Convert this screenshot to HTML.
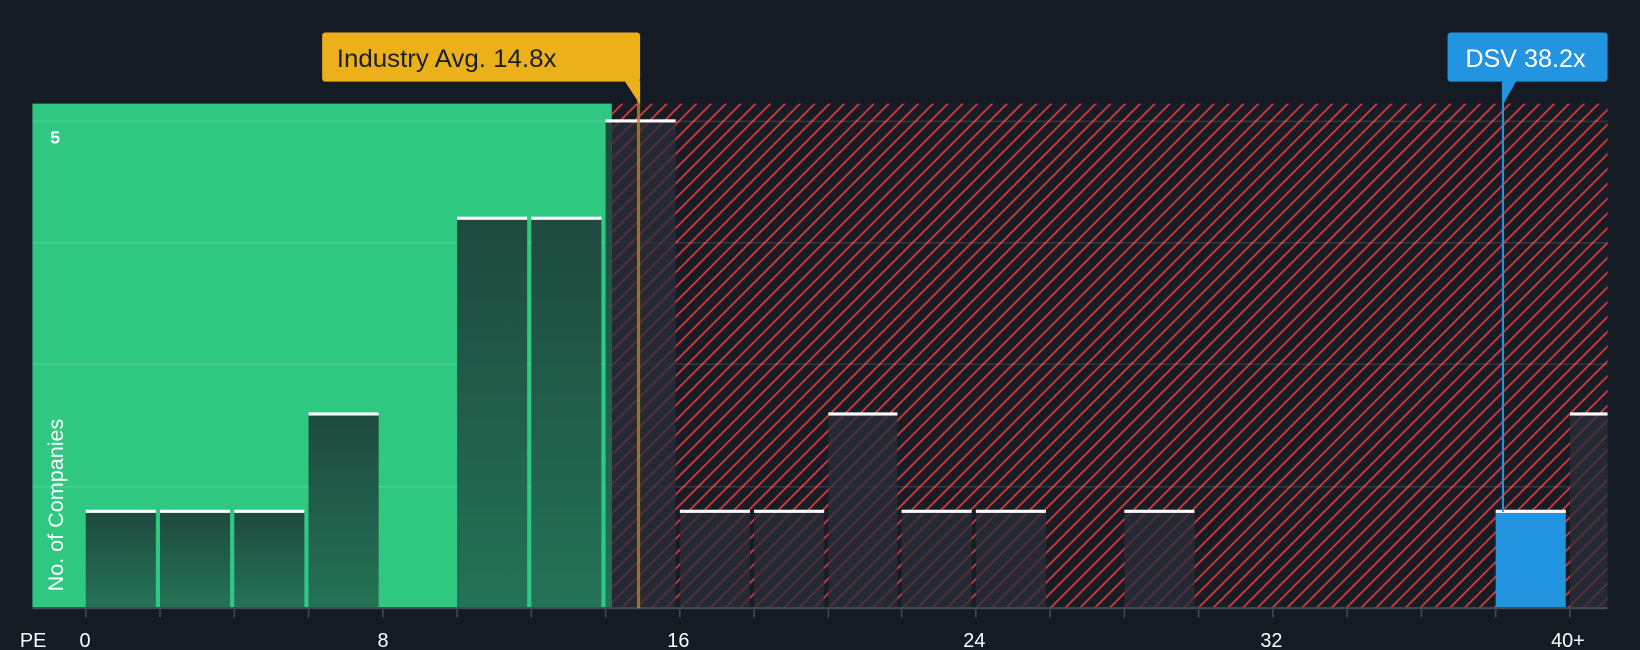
<!DOCTYPE html>
<html><head><meta charset="utf-8"><style>
html,body{margin:0;padding:0;background:#151b24;}
svg{display:block;}
text{font-family:"Liberation Sans",sans-serif;}
</style></head><body>
<svg width="1640" height="650" viewBox="0 0 1568 621" preserveAspectRatio="none" xmlns="http://www.w3.org/2000/svg">
<defs>
<pattern id="h" patternUnits="userSpaceOnUse" width="10" height="10" patternTransform="rotate(45)">
<rect width="10" height="10" fill="#181c25"/>
<rect x="0" y="0" width="1.7" height="10" fill="#d63a3e"/>
</pattern>
<linearGradient id="g" x1="0" y1="0" x2="0" y2="1"><stop offset="0" stop-color="#1e4a3f"/><stop offset="1" stop-color="#247356"/></linearGradient>
</defs>
<rect width="1568" height="621" fill="#151b24"/>
<rect x="31" y="99" width="554" height="482" fill="#2ec880"/>
<rect x="585" y="99" width="952" height="482" fill="url(#h)"/>
<g stroke="#ffffff" stroke-opacity="0.12" stroke-width="1.5">
<line x1="31" y1="116" x2="1537" y2="116"/><line x1="31" y1="232" x2="1537" y2="232"/>
<line x1="31" y1="348" x2="1537" y2="348"/><line x1="31" y1="465" x2="1537" y2="465"/>
</g>
<g fill="url(#g)">
<rect x="82" y="489" width="67" height="92"/><rect x="153" y="489" width="67" height="92"/>
<rect x="224" y="489" width="67" height="92"/><rect x="295" y="396" width="67" height="185"/>
<rect x="437" y="209" width="67" height="372"/><rect x="508" y="209" width="67" height="372"/>
<rect x="579" y="116" width="6" height="465"/>
</g>
<g fill="#2a2e38" fill-opacity="0.75">
<rect x="585" y="116" width="61" height="465"/>
<rect x="650" y="489" width="67" height="92"/><rect x="721" y="489" width="67" height="92"/>
<rect x="792" y="396" width="66" height="185"/><rect x="862" y="489" width="67" height="92"/>
<rect x="933" y="489" width="67" height="92"/><rect x="1075" y="489" width="67" height="92"/>
<rect x="1501" y="396" width="36" height="185"/>
</g>
<rect x="1430" y="489" width="67" height="92" fill="#2394e0"/>
<g fill="#ffffff">
<rect x="82" y="487" width="67" height="3"/><rect x="153" y="487" width="67" height="3"/>
<rect x="224" y="487" width="67" height="3"/><rect x="295" y="394" width="67" height="3"/>
<rect x="437" y="207" width="67" height="3"/><rect x="508" y="207" width="67" height="3"/>
<rect x="579" y="114" width="67" height="3"/>
<rect x="650" y="487" width="67" height="3"/><rect x="721" y="487" width="67" height="3"/>
<rect x="792" y="394" width="66" height="3"/><rect x="862" y="487" width="67" height="3"/>
<rect x="933" y="487" width="67" height="3"/><rect x="1075" y="487" width="67" height="3"/>
<rect x="1430" y="487" width="67" height="3"/><rect x="1501" y="394" width="36" height="3"/>
</g>
<rect x="31" y="580" width="1506" height="2" fill="#444a55"/>
<g stroke="#444a55" stroke-width="1.5">
<line x1="82" y1="582" x2="82" y2="590"/><line x1="153" y1="582" x2="153" y2="590"/><line x1="224" y1="582" x2="224" y2="590"/><line x1="295" y1="582" x2="295" y2="590"/><line x1="366" y1="582" x2="366" y2="590"/><line x1="437" y1="582" x2="437" y2="590"/><line x1="508" y1="582" x2="508" y2="590"/><line x1="579" y1="582" x2="579" y2="590"/><line x1="650" y1="582" x2="650" y2="590"/><line x1="721" y1="582" x2="721" y2="590"/><line x1="792" y1="582" x2="792" y2="590"/><line x1="862" y1="582" x2="862" y2="590"/><line x1="933" y1="582" x2="933" y2="590"/><line x1="1004" y1="582" x2="1004" y2="590"/><line x1="1075" y1="582" x2="1075" y2="590"/><line x1="1146" y1="582" x2="1146" y2="590"/><line x1="1217" y1="582" x2="1217" y2="590"/><line x1="1288" y1="582" x2="1288" y2="590"/><line x1="1359" y1="582" x2="1359" y2="590"/><line x1="1430" y1="582" x2="1430" y2="590"/><line x1="1501" y1="582" x2="1501" y2="590"/>
</g>
<rect x="609" y="78" width="3" height="503" fill="#b8861a" opacity="0.8"/>
<rect x="308" y="31" width="304" height="47" rx="3" fill="#ebb01a"/>
<polygon points="597,77 612,77 612,100" fill="#ebb01a"/>
<text x="322" y="64" font-size="24" fill="#1a1f28" textLength="210" lengthAdjust="spacingAndGlyphs">Industry Avg. 14.8x</text>
<rect x="1436" y="78" width="2" height="411" fill="#2394e0"/>
<rect x="1384" y="31" width="153" height="47" rx="3" fill="#2394e0"/>
<polygon points="1437,77 1450,77 1437,100" fill="#2394e0"/>
<text x="1401" y="64" font-size="24" fill="#ffffff" textLength="115" lengthAdjust="spacingAndGlyphs">DSV 38.2x</text>
<text x="48" y="137" font-size="17" font-weight="bold" fill="#ffffff">5</text>
<text transform="translate(60,565) rotate(-90)" font-size="20" fill="#ffffff" textLength="165" lengthAdjust="spacingAndGlyphs">No. of Companies</text>
<g font-size="19" fill="#ffffff">
<text x="19" y="618">PE</text><text x="76" y="618">0</text><text x="361" y="618">8</text>
<text x="638" y="618">16</text><text x="921" y="618">24</text><text x="1205" y="618">32</text><text x="1483" y="618">40+</text>
</g>
</svg>
</body></html>
